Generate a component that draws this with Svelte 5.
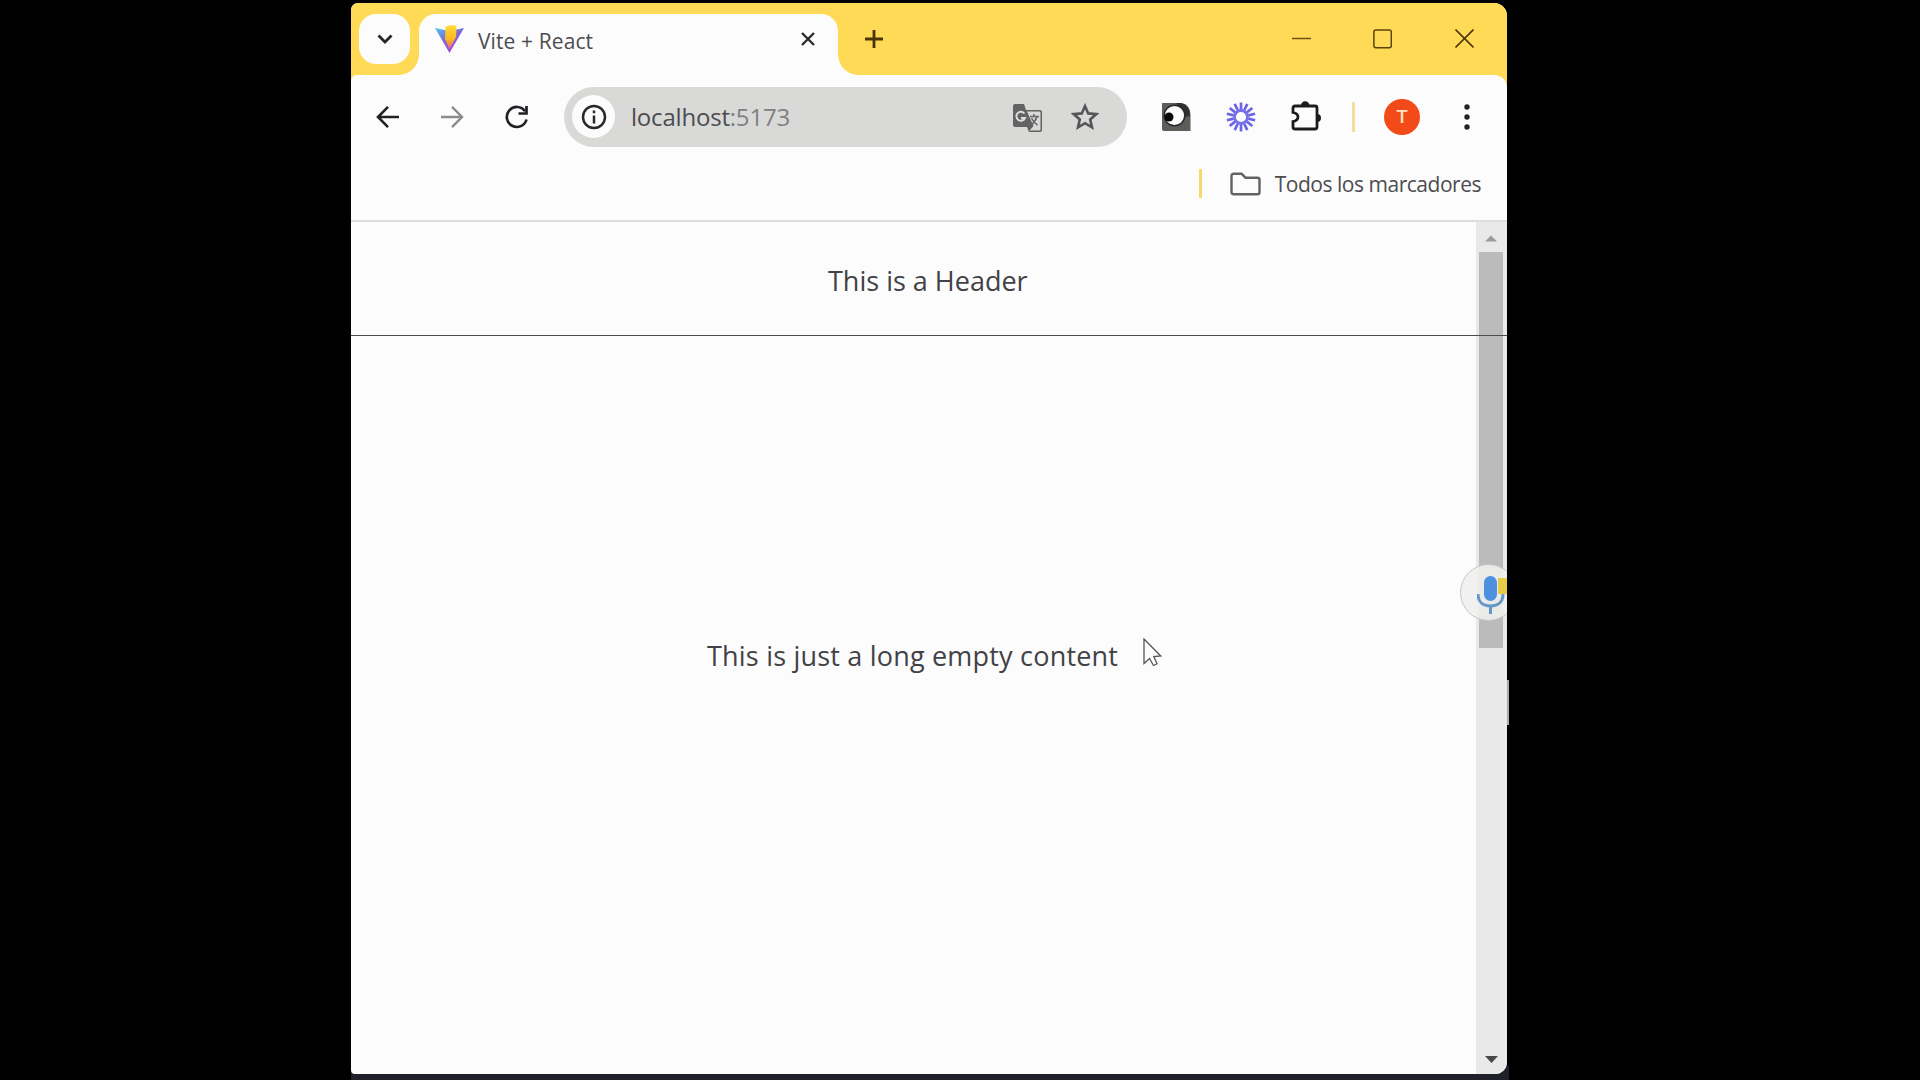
<script>
  const rays = Array.from({ length: 14 }, (_, i) => (i * 360) / 14);
</script>

<main class="desktop">
  <section class="window">
    <header class="titlebar">
      <button class="tab-list" aria-label="Tabs">
        <svg width="16" height="10" viewBox="0 0 16 10"><path d="M1.5 1.5 8 8l6.5-6.5" fill="none" stroke="#25252a" stroke-width="2.8" /></svg>
      </button>
      <div class="tab">
        <svg class="vite" width="29" height="29" viewBox="0 0 29 29">
          <defs>
            <linearGradient id="v" x1="0" y1="0" x2="0.6" y2="1"><stop offset="0" stop-color="#4cc4ee" /><stop offset="0.5" stop-color="#7a6ad8" /><stop offset="1" stop-color="#a94ad8" /></linearGradient>
            <linearGradient id="b" x1="0" y1="0" x2="0" y2="1"><stop offset="0" stop-color="#ffdc38" /><stop offset="0.6" stop-color="#fdb51c" /><stop offset="1" stop-color="#ec638a" /></linearGradient>
          </defs>
          <path d="M0 3 14.5 6 29 3 14.5 28z" fill="url(#v)" />
          <path d="M10.500 2 14 .5 20 0l1.500 3-.5 9-6.500 12L10 14z" fill="url(#b)" />
        </svg>
        <span class="tab-title">Vite + React</span>
        <svg class="tab-close" width="14" height="14" viewBox="0 0 14 14"><path d="m1 1 12 12M13 1 1 13" stroke="#28282d" stroke-width="2.3" /></svg>
      </div>
      <svg class="plus" width="18" height="18" viewBox="0 0 18 18"><path d="M0 9h18M9 0v18" stroke="#4a3305" stroke-width="2.8" /></svg>
      <div class="controls">
        <svg width="19" height="20" viewBox="0 0 19 20"><path d="M0 9.5h19" stroke="#6e5319" stroke-width="1.3" /></svg>
        <svg width="19" height="20" viewBox="0 0 19 20"><rect x=".9" y=".9" width="17.4" height="17.8" rx="2" fill="none" stroke="#5b430c" stroke-width="1.5" /></svg>
        <svg class="window-close" width="19" height="20" viewBox="0 0 19 20"><path d="m.5.5 18 18M18.500.5l-18 18" stroke="#4d3708" stroke-width="1.6" /></svg>
      </div>
    </header>

    <nav class="toolbar">
      <svg class="back" width="24" height="24" viewBox="0 0 24 24"><path d="M23 12H2.500M12 1.800 2 12l10 10.200" fill="none" stroke="#222226" stroke-width="2.6" /></svg>
      <svg class="forward" width="24" height="24" viewBox="0 0 24 24"><path d="M1 12h20.500M12 1.800 22 12 12 22.200" fill="none" stroke="#8b8b8e" stroke-width="2.4" /></svg>
      <svg class="reload" width="24" height="24" viewBox="0 0 24 24"><path d="M21.500 14.500A10 10 0 1 1 20 6.200M21.500 1v7.500H13.500" fill="none" stroke="#222226" stroke-width="2.7" /></svg>
      <div class="omnibox">
        <span class="info">
          <svg width="26" height="26" viewBox="0 0 26 26"><circle cx="13" cy="13" r="11" fill="none" stroke="#29292d" stroke-width="2.5" /><path d="M13 11.500v8M13 6.500v2.800" stroke="#29292d" stroke-width="2.5" /></svg>
        </span>
        <span class="url">localhost<span class="port">:5173</span></span>
        <svg class="translate" width="30" height="30" viewBox="0 0 30 30">
          <path d="M2 1h9l2 6h14a2 2 0 0 1 2 2v18a2 2 0 0 1-2 2H16l-2-5H2a2 2 0 0 1-2-2V3a2 2 0 0 1 2-2z" fill="#636363" />
          <path d="M14 8.500h12.500a1 1 0 0 1 1 1v17a1 1 0 0 1-1 1H16.500l4-4.500z" fill="#d9d9d8" />
          <path d="M11.500 10.500a4.500 4.500 0 1 0 .5 4.500H8" fill="none" stroke="#dedede" stroke-width="1.900" />
          <path d="M17 13.500h9M21 11v2.500M24 13.500c-1 4-3 6-5.500 8.500M18.500 15c1.500 3.500 3.500 5.500 6 7" fill="none" stroke="#666" stroke-width="1.500" />
        </svg>
        <svg class="star" width="28" height="28" viewBox="0 0 28 28"><path d="m14 3 3.200 7.400 8.100.7-6.100 5.300 1.800 8-7-4.200-7 4.200 1.800-8-6.100-5.300 8.100-.7z" fill="none" stroke="#56565a" stroke-width="2.600" /></svg>
      </div>
      <svg class="eye" width="30" height="30" viewBox="0 0 30 30">
        <path d="M1 1h17q11 0 11.500 12v16H3a2 2 0 0 1-2-2z" fill="#5d5d5a" />
        <path d="M15 1h5q9 2 9 13l-5 1z" fill="#303030" />
        <circle cx="13.500" cy="13.500" r="10.300" fill="#fdfdfd" stroke="#292929" stroke-width="1.500" /><circle cx="8" cy="15" r="4.500" fill="#080808" />
      </svg>
      <svg class="burst" width="30" height="30" viewBox="-15 -15 30 30">
        <circle r="6.500" fill="none" stroke="#7770e8" stroke-width="2.800" />
        {#each rays as angle}<path d="M0-7.500V-14.500" transform={`rotate(${angle})`} stroke="#6c63e6" stroke-width="2.700" />{/each}
      </svg>
      <svg class="puzzle" width="31" height="31" viewBox="0 0 31 31">
        <path d="M4 5h20a2 2 0 0 1 2 2v19a2 2 0 0 1-2 2H4a2 2 0 0 1-2-2v-5.500q5-1 5-4.500t-5-4.500V7a2 2 0 0 1 2-2z" fill="none" stroke="#1c1c1e" stroke-width="2.800" />
        <path d="M10 4.500a4.200 4.200 0 0 1 8.400 0zM26 13a4 4 0 0 1 0 8z" fill="#1c1c1e" />
      </svg>
      <i class="sep"></i>
      <span class="avatar">T</span>
      <svg class="dots" width="6" height="26" viewBox="0 0 6 26"><circle cx="3" cy="3" r="2.700" /><circle cx="3" cy="13" r="2.700" /><circle cx="3" cy="23" r="2.700" /></svg>
    </nav>

    <div class="bookmarks">
      <i class="sep strong"></i>
      <svg width="31" height="24" viewBox="0 0 31 24"><path d="M3.500 1.700h8l4 4h12a2 2 0 0 1 2 2v12.500a2 2 0 0 1-2 2h-24a2 2 0 0 1-2-2V3.700a2 2 0 0 1 2-2z" fill="none" stroke="#626264" stroke-width="2.400" /></svg>
      <span class="bookmark-label">Todos los marcadores</span>
    </div>

    <div class="viewport">
      <div class="page">
        <div class="page-header"><span class="heading">This is a Header</span></div>
        <div class="page-body"><span class="content">This is just a long empty content</span></div>
      </div>
      <div class="scrollbar">
        <svg width="12" height="7" viewBox="0 0 12 7"><path d="m0 6.500 6-6 6 6z" fill="#9b9b97" /></svg>
        <div class="thumb"></div>
        <svg class="down" width="13" height="7" viewBox="0 0 13 7"><path d="M0 0h13L6.500 7z" fill="#484848" /></svg>
      </div>
      <div class="rule"></div>
      <div class="mic">
        <svg width="38" height="42" viewBox="0 0 38 42">
          <path d="M21 4h17v16H21z" fill="#e7ca48" />
          <rect x="7" y="2" width="13" height="25" rx="6.500" fill="#4b91df" />
          <path d="M1 20c0 8 5 12 12.500 12S26 28 26 20M13.500 32v8" fill="none" stroke="#6297c8" stroke-width="3" />
        </svg>
      </div>
      <svg class="cursor" width="19" height="29" viewBox="0 0 19 29"><path d="M1 1v24.500l5.500-5 4 7 3.500-1.700-3.200-7.300 7-.5z" fill="#fdfdfd" stroke="#55555c" stroke-width="1.300" /></svg>
    </div>
  </section>
  <i class="sliver"></i>
</main>

<style>
  :global(body) { margin: 0; background: #000; overflow: hidden; }
  .desktop {
    position: relative; box-sizing: border-box; width: 1920px; height: 1080px; padding: 3px 0 0 351px;
    background: linear-gradient(#20202a, #20202a) 351px 1066px / 1158px 14px no-repeat #000;
    font-family: "Open Sans", "Noto Sans", sans-serif; color: #4c4c50;
  }
  svg { display: block; flex: none; }
  span { white-space: nowrap; }
  .window {
    display: flex; flex-direction: column; width: 1156px; height: 1071px; overflow: hidden;
    background: #fcfcfc; border-radius: 7px 13px 12px 4px;
  }
  .titlebar { display: flex; height: 72px; flex: none; background: #ffda56; }
  .tab-list {
    display: flex; align-items: center; justify-content: center; width: 51px; height: 50px;
    margin: 11px 9px 0 8px; padding: 0; border: 0; border-radius: 17px; background: #fcfcfc;
  }
  .tab {
    position: relative; display: flex; align-items: flex-start; box-sizing: border-box; width: 419px;
    margin-top: 11px; padding: 11px 23px 0 16px; background: #fcfcfc; border-radius: 17px 17px 0 0;
  }
  .tab::before, .tab::after { content: ""; position: absolute; bottom: 0; width: 20px; height: 20px; }
  .tab::before { right: 100%; background: radial-gradient(circle at 0 0, transparent 19.500px, #fcfcfc 20px); }
  .tab::after { left: 100%; background: radial-gradient(circle at 100% 0, transparent 19.500px, #fcfcfc 20px); }
  .tab-title { margin: 2px 0 0 14px; font-size: 21px; line-height: 28px; letter-spacing: 0.1px; }
  .tab-close { margin: 7px 0 0 auto; }
  .plus { margin: 27px 0 0 27px; }
  .controls { display: flex; gap: 62px; margin: 26px 33px 0 auto; }
  .window-close { margin-left: 1px; }

  .toolbar {
    display: flex; align-items: center; height: 84px; flex: none;
    background: #fcfcfc; position: relative;
  }
  .toolbar::before, .toolbar::after { content: ""; position: absolute; top: 0; width: 12px; height: 12px; }
  .toolbar::before { left: 0; width: 5px; height: 5px; background: radial-gradient(circle at 100% 100%, transparent 4.500px, #ffda56 5px); }
  .toolbar::after { right: 0; background: radial-gradient(circle at 0 100%, transparent 11.500px, #ffda56 12px); }
  .back { margin-left: 25px; }
  .forward { margin-left: 40px; }
  .reload { margin-left: 41px; }
  .omnibox {
    display: flex; align-items: center; width: 563px; height: 60px; margin-left: 35px; margin-bottom: 1px;
    border-radius: 30px; background: #d9d9d7;
  }
  .info { display: flex; align-items: center; justify-content: center; width: 43px; height: 43px; margin-left: 8px; border-radius: 50%; background: #fcfcfc; }
  .url { margin-left: 16px; font-size: 24px; line-height: 34px; letter-spacing: -0.2px; }
  .port { color: #808083; }
  .translate { margin: 3px 28px 0 auto; }
  .star { margin-right: 28px; }
  .eye { margin-left: 34px; }
  .burst { margin-left: 35px; }
  .puzzle { margin-left: 35px; margin-bottom: 2px; }
  .sep { width: 3px; height: 30px; margin-left: 30px; background: #f0df9b; }
  .avatar {
    width: 36px; height: 36px; margin-left: 29px; border-radius: 50%; background: #f24a18;
    color: #ffe0c0; font: 500 19px/36px Roboto, sans-serif; text-align: center;
  }
  .dots { margin-left: 44px; fill: #252528; }
  .bookmarks { display: flex; align-items: center; justify-content: flex-end; height: 49px; flex: none; padding: 0 26px 12px 0; }
  .sep.strong { height: 29px; margin: 0 28px 0 0; background: #f5da6b; }
  .bookmark-label { margin-left: 14px; font-size: 21px; line-height: 30px; letter-spacing: -0.480px; }

  .viewport { position: relative; display: flex; flex: 1; border-top: 2px solid #dededf; }
  .page { display: flex; flex-direction: column; flex: 1; font-size: 27px; line-height: 36px; color: #424246; }
  .page-header { box-sizing: border-box; height: 114px; padding-top: 41px; padding-left: 477px; }
  .page-body { padding: 302px 0 0 356px; }
  .content { letter-spacing: 0.2px; }
  .scrollbar { display: flex; flex-direction: column; align-items: center; width: 31px; background: #e9e9e9; padding: 13px 1px 0 0; box-sizing: border-box; }
  .thumb { width: 24px; height: 396px; margin-top: 10px; background: #bbbbbc; }
  .down { margin: auto 0 11px; }
  .rule { position: absolute; left: 0; right: 0; top: 113px; height: 1px; background: #4c4c55; }
  .mic {
    position: absolute; box-sizing: border-box; left: 1109px; top: 342px; width: 57px; height: 57px;
    padding: 9px 0 0 16px; overflow: hidden; border: 1.500px solid #c6c6c6; border-radius: 50%; background: rgba(239, 239, 237, 0.9);
  }
  .cursor { position: absolute; left: 792px; top: 416px; }
  .sliver { position: absolute; left: 1507px; top: 680px; width: 2px; height: 45px; background: #aaa; }
</style>
